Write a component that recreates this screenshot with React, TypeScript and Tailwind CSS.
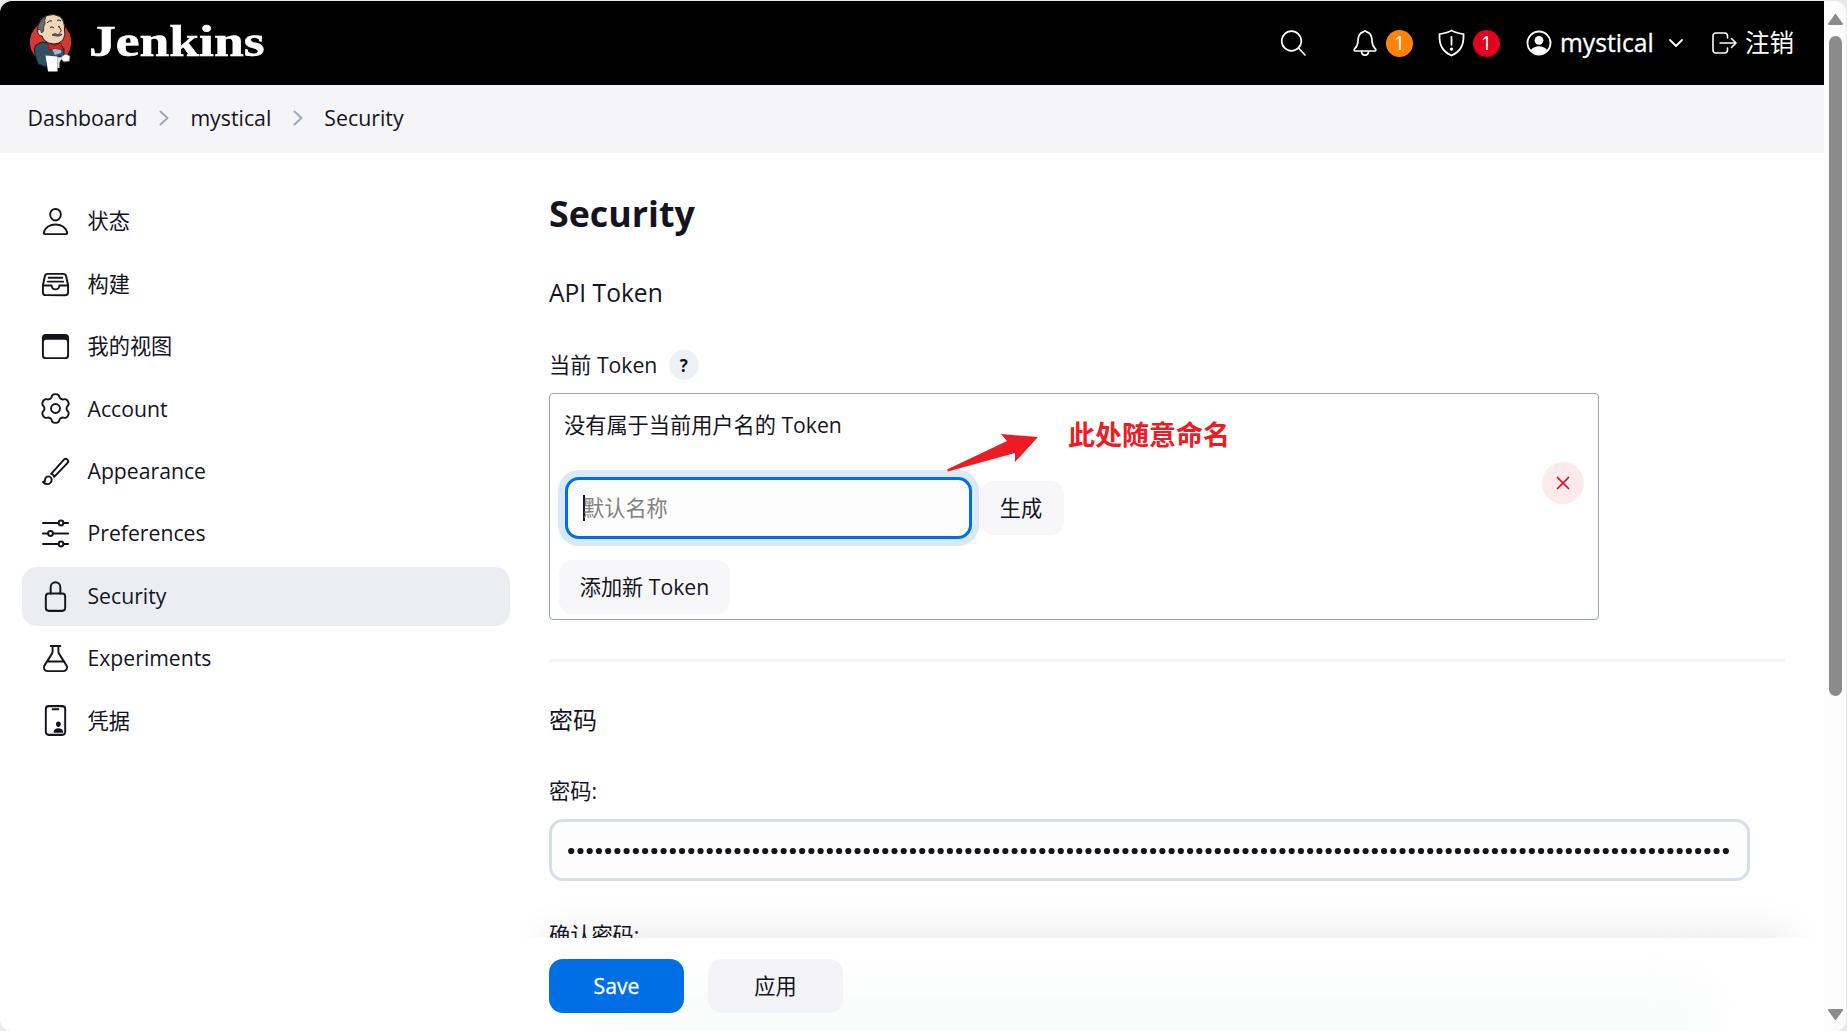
import React from "react";
import {
  IoPersonOutline, IoFileTrayFullOutline, IoBrowsersOutline, IoBrushOutline,
  IoLockClosedOutline, IoFlaskOutline, IoIdCardOutline,
} from "react-icons/io5";

// Six-lobed gear outline, smoothed through the midpoints of its corner points.
const gearPoints = Array.from({ length: 6 }).flatMap((_, k) =>
  [[-9, 15], [9, 15], [17, 13.4], [21, 11.6], [39, 11.6], [43, 13.4]].map(([offset, r]) => {
    const a = ((60 * k - 90 + offset) * Math.PI) / 180;
    return [16 + r * Math.cos(a), 16 + r * Math.sin(a)];
  })
);
const gearPath =
  gearPoints
    .map((p, i) => {
      const n = gearPoints[(i + 1) % gearPoints.length];
      const mx = ((p[0] + n[0]) / 2).toFixed(2);
      const my = ((p[1] + n[1]) / 2).toFixed(2);
      const last = gearPoints[gearPoints.length - 1];
      const start = i === 0 ? `M${((p[0] + last[0]) / 2).toFixed(2)} ${((p[1] + last[1]) / 2).toFixed(2)}` : "";
      return `${start}Q${p[0].toFixed(2)} ${p[1].toFixed(2)} ${mx} ${my}`;
    })
    .join("") + "Z";

type IconProps = { className?: string };

function GearIcon({ className }: IconProps) {
  return (
    <svg className={className} viewBox="0 0 32 32" fill="none" stroke="currentColor" strokeWidth="2" strokeLinejoin="round">
      <path d={gearPath} />
      <circle cx="16" cy="16" r="4.600" />
    </svg>
  );
}

function SlidersIcon({ className }: IconProps) {
  return (
    <svg className={className} viewBox="0 0 31 31" fill="none" stroke="currentColor" strokeWidth="2" strokeLinecap="round">
      <path d="M3 5h15.500M23.500 5H28M3 15.500h5M13 15.500h15M3 26h15.500M23.500 26H28" />
      <circle cx="21" cy="5" r="2.400" />
      <circle cx="10.500" cy="15.500" r="2.400" />
      <circle cx="21" cy="26" r="2.400" />
    </svg>
  );
}

const items = [
  { label: "状态", Icon: IoPersonOutline, size: "size-[31px]" },
  { label: "构建", Icon: IoFileTrayFullOutline, size: "size-[31px]" },
  { label: "我的视图", Icon: IoBrowsersOutline, size: "size-[31px]" },
  { label: "Account", Icon: GearIcon, size: "size-[31px]" },
  { label: "Appearance", Icon: IoBrushOutline, size: "size-[31px]" },
  { label: "Preferences", Icon: SlidersIcon, size: "size-[31px]" },
  { label: "Security", Icon: IoLockClosedOutline, size: "size-[31px] scale-y-[1.06]", active: true },
  { label: "Experiments", Icon: IoFlaskOutline, size: "size-[31px]" },
  { label: "凭据", Icon: IoIdCardOutline, size: "size-[31px] scale-y-[1.06]" },
];

function Butler() {
  return (
    <svg className="h-[60px] w-[44px] shrink-0" viewBox="0 0 44 60">
      <ellipse cx="22.500" cy="29" rx="20.700" ry="21" fill="#d33833" />
      <path d="M14 29 L8 32 Q5 36 8 45 L10 51 L18 54 L20 44 L36 44 L36 36 L32 31 Z" fill="#335061" stroke="#0f1c24" strokeWidth="1" />
      <path d="M9.500 17 Q11 6 19 2.500 Q26 0 32 3.500 Q37 8 36.500 17 Q38 22 35 27 Q31 31 26 31 Q20 31 16 27 L14 23 Q9.500 23 9.500 17Z" fill="#f0d6b7" stroke="#231f20" strokeWidth="1" />
      <path d="M9.500 15 Q11 7 18 3 Q16 8 17 11 Q15 13 15.500 18 L13.500 20 Q13 15 9.500 17Z" fill="#6d6b6d" stroke="#231f20" strokeWidth=".8" />
      <path d="M19 10 Q21 7 24 8 M29 7.500 Q31 6 33 8 M22 14.500 Q24 13 26 15 M30 13.500 L32 14 M31 14 Q35 18 31.500 19.500" fill="none" stroke="#231f20" strokeWidth="1" />
      <path d="M24 22 Q27 19.500 29.500 21.500 Q32 20 34 21.500 Q31 24.500 24 22Z" fill="#6d6b6d" stroke="#231f20" strokeWidth=".7" />
      <path d="M23 34 L34 34 L33 40 L27 42Z" fill="#9fb9c6" />
      <path d="M20 30 L26.500 32.500 L33 30 L34 37 L27.500 35.500 L21 37Z" fill="#e02020" stroke="#6b1512" strokeWidth=".6" />
      <path d="M17.500 42.500 L29.500 43.500 L29.500 58.500 L20 58.500Z" fill="#fff" />
      <path d="M34 43 L38 41 L42 43 L41.500 48 L36 49 L33 46Z" fill="#fff" stroke="#666" strokeWidth=".8" />
      <path d="M29.500 44.500 L34 44 L31.500 50 L31.500 55 L29.500 55Z" fill="#dce3e6" />
    </svg>
  );
}

function Crumb() {
  return (
    <svg className="mx-[21.500px] h-[18px] w-[10px]" viewBox="0 0 10 18" fill="none" stroke="#9aa9c1" strokeWidth="2" strokeLinecap="round" strokeLinejoin="round">
      <path d="M1.500 2.500 8.500 9 1.500 15.500" />
    </svg>
  );
}

function Header() {
  return (
    <header className="flex h-[84px] shrink-0 items-center bg-black pl-[28px] text-white">
      <Butler />
      <span className="-mt-[4px] ml-[17px] inline-block w-[180px] origin-left scale-x-[1.19] font-['Liberation_Serif'] text-[45px] leading-[50px] font-bold [-webkit-text-stroke:0.6px_white]">Jenkins</span>
      <div className="ml-auto flex items-center">
        <svg className="h-[28px] w-[28px]" viewBox="0 0 28 28" fill="none" stroke="#fff" strokeWidth="1.700" strokeLinecap="round">
          <circle cx="11.500" cy="12" r="9.800" />
          <path d="m18.500 19 6.500 7" />
        </svg>
        <svg className="ml-[45px] h-[28px] w-[24px]" viewBox="0 0 24 28" fill="none" stroke="#fff" strokeWidth="1.700" strokeLinejoin="round" strokeLinecap="round">
          <path d="M12 1.800C11 3 9.500 3 8 4c-2.500 2-3 5-3 8 0 4-1.500 6-3.600 8.200-.5 1 0 1.800 1 1.800h19.200c1 0 1.500-.8 1-1.800C20.500 18 19 16 19 12c0-3-.5-6-3-8-1.500-1-3-1-4-2.200ZM8.500 22c0 5.500 7 5.500 7 0" />
        </svg>
        <span className="ml-[9px] flex size-[27px] items-center justify-center rounded-full bg-[#ff820a] text-[20px]">1</span>
        <svg className="ml-[25px] h-[28px] w-[27px]" viewBox="0 0 27 30" preserveAspectRatio="none" fill="none" stroke="#fff" strokeWidth="1.800" strokeLinejoin="round" strokeLinecap="round">
          <path d="M13.500 1.500C10 4 6 4.500 1.500 5.500c-.5 12 3 18.500 12 23 9-4.500 12.500-11 12-23-4.500-1-8.500-1.500-12-4ZM13.500 8.500v8.500" />
          <circle cx="13.500" cy="21.500" r=".8" fill="#fff" />
        </svg>
        <span className="ml-[8px] flex size-[27px] items-center justify-center rounded-full bg-[#e6001f] text-[20px]">1</span>
        <svg className="ml-[26px] size-[26px]" viewBox="0 0 26 26">
          <circle cx="13" cy="13" r="11.500" fill="none" stroke="#fff" strokeWidth="1.800" />
          <circle cx="13" cy="10.300" r="4.400" fill="#fff" />
          <path d="M4.800 20c4-5 12.400-5 16.400 0-4 5.500-12.400 5.500-16.400 0Z" fill="#fff" />
        </svg>
        <span className="ml-[8px] w-[94px] text-[24.700px] [-webkit-text-stroke:0.3px_white]">mystical</span>
        <svg className="ml-[14px] h-[10px] w-[16px]" viewBox="0 0 16 10" fill="none" stroke="#fff" strokeWidth="1.800" strokeLinecap="round" strokeLinejoin="round"><path d="m2 2 6 6 6-6" /></svg>
        <svg className="ml-[28px] h-[22px] w-[25px]" viewBox="0 0 25 22" fill="none" stroke="#fff" strokeWidth="1.600" strokeLinecap="round" strokeLinejoin="round">
          <path d="M15.500 6V4q0-3-3-3H4Q1 1 1 4v14q0 3 3 3h8.500q3 0 3-3v-2M8 11h16M19.500 6.500 24 11l-4.500 4.500" />
        </svg>
        <span className="mt-px mr-[30px] ml-[8px] text-[24.500px]">注销</span>
      </div>
    </header>
  );
}

export default function App() {
  return (
    <div className="h-[1031px] w-[1847px] overflow-hidden bg-[#e9e9e9] pt-px font-['Open_Sans','Noto_Sans_CJK_SC',sans-serif] text-[21.2px] text-[#14141f]">
      <div className="flex h-[1030px] w-[1846px] overflow-hidden rounded-[12px] bg-white">
        <div className="flex w-[1824px] flex-col overflow-hidden">
          <Header />
          <nav className="flex h-[68px] shrink-0 items-center bg-[#f5f5f8] pb-[2px] pl-[27.500px] text-[21.300px]">
            <span>Dashboard</span><Crumb /><span>mystical</span><Crumb /><span>Security</span>
          </nav>
          <div className="flex min-h-0 flex-1">
            <aside className="flex w-[549px] shrink-0 flex-col gap-[3.400px] pt-[39.300px] pr-[39px] pl-[22px]">
              {items.map(({ label, Icon, size, active }) => (
                <div key={label} className={`flex h-[59px] shrink-0 items-center gap-[16.500px] rounded-[15px] pl-[18px] ${active ? "bg-[#ecedf3]" : ""}`}>
                  <Icon className={size} />
                  <span className="-mt-px">{label}</span>
                </div>
              ))}
            </aside>
            <main className="flex flex-1 flex-col">
              <h1 className="mt-[33px] text-[35.800px] leading-[54px] font-bold">Security</h1>
              <h2 className="mt-[36px] text-[24.600px] leading-[34px]">API Token</h2>
              <div className="mt-[40px] flex h-[30px] items-center">
                <span>当前 Token</span>
                <span className="ml-[11.500px] flex size-[30px] items-center justify-center rounded-full bg-[#edf1f5] pt-px text-[17px] font-bold">?</span>
              </div>
              <section className="relative mt-[13px] h-[227px] w-[1050px] shrink-0 rounded-[4px] border border-[#98a4b0]">
                <p className="mt-[15px] ml-[14px] leading-[32px]">没有属于当前用户名的 Token</p>
                <div className="mt-[36px] ml-[15px] flex items-center gap-[8px]">
                  <div className="flex h-[62px] w-[407px] items-center rounded-[14px] border-[3px] border-[#006fe6] bg-[#fdfdfd] pl-[15px] shadow-[0_0_0_7px_#d9e9fa]">
                    <span className="h-[26px] w-[2px] bg-[#14141f]" />
                    <span className="-ml-[2px] text-[#808080]">默认名称</span>
                  </div>
                  <button className="flex h-[54px] w-[84px] items-center justify-center rounded-[14px] bg-[#f7f7fa] pr-[2px]">生成</button>
                </div>
                <button className="mt-[21px] ml-[9px] flex h-[54px] w-[171px] items-center justify-center rounded-[14px] bg-[#f7f7fa]">添加新 Token</button>
                <button className="absolute top-[68px] right-[14px] flex size-[42px] items-center justify-center rounded-full bg-[#fcebed]">
                  <svg className="size-[14px]" viewBox="0 0 14 14" stroke="#e6001f" strokeWidth="1.700" strokeLinecap="round"><path d="m1.500 1.500 11 11m0-11-11 11" /></svg>
                </button>
                <svg className="absolute top-[39px] left-[397px] h-[39px] w-[93px]" viewBox="0 0 93 39"><path d="M0 36.500 60 8 54 1 91 4 68 29 68 20 1 38.500Z" fill="#ed1c24" /></svg>
                <span className="absolute top-[22px] left-[518px] text-[27px] leading-[38px] font-bold text-[#ed1c24]">此处随意命名</span>
              </section>
              <hr className="mt-[39px] mr-[39px] border-t-[3px] border-[#f3f3f8]" />
              <h2 className="mt-[41px] text-[24px] leading-[34px]">密码</h2>
              <label className="mt-[39px] leading-[30px]">密码:</label>
              <div className="mt-[13px] flex h-[62px] w-[1201px] shrink-0 items-center rounded-[14px] border-[3px] border-[#d7dee8] bg-[#fdfdfd] px-[15px]">
                <svg className="mt-px h-[8px] w-full" aria-hidden="true">
                  {Array.from({ length: 127 }, (_, i) => <circle key={i} cx={4.2 + i * 9.237} cy="4" r="3.100" fill="#14141f" />)}
                </svg>
              </div>
              <label className="mt-[39px] h-[30px] leading-[30px]">确认密码:</label>
              <div className="relative -mt-[12px] flex h-[94px] shrink-0 gap-[24px] pt-[21px]">
                <div className="pointer-events-none absolute -top-[55px] right-0 -left-[40px] h-[55px] overflow-hidden">
                  <div className="mt-[55px] mr-[39px] ml-[40px] h-[93px] shadow-[0_0_40px_5px_rgba(0,0,0,0.09)]" />
                </div>
                <div className="absolute inset-0 bg-white" />
                <div className="absolute top-[40px] right-[110px] left-[50px] h-[90px] rounded-[30px] bg-[#fafbfb] blur-[20px]" />
                <button className="relative flex h-[54px] w-[135px] items-center justify-center rounded-[14px] bg-[#006fe6] text-white [-webkit-text-stroke:0.3px_white]">Save</button>
                <button className="relative flex h-[54px] w-[135px] items-center justify-center rounded-[14px] bg-[#f3f3f7]">应用</button>
              </div>
            </main>
          </div>
        </div>
        <div className="flex w-[22px] flex-col items-center bg-[#fcfcfc] pt-[13px] pb-[11px]">
          <svg className="h-[11px] w-[15px]" viewBox="0 0 15 11"><path d="M7.500 1 14 10H1Z" fill="#8b8b8b" stroke="#8b8b8b" strokeWidth="2" strokeLinejoin="round" /></svg>
          <div className="mt-[11px] h-[660px] w-[13px] rounded-full bg-[#8b8b8b]" />
          <svg className="mt-auto h-[11px] w-[15px]" viewBox="0 0 15 11"><path d="M7.500 10 14 1H1Z" fill="#8b8b8b" stroke="#8b8b8b" strokeWidth="2" strokeLinejoin="round" /></svg>
        </div>
      </div>
    </div>
  );
}
